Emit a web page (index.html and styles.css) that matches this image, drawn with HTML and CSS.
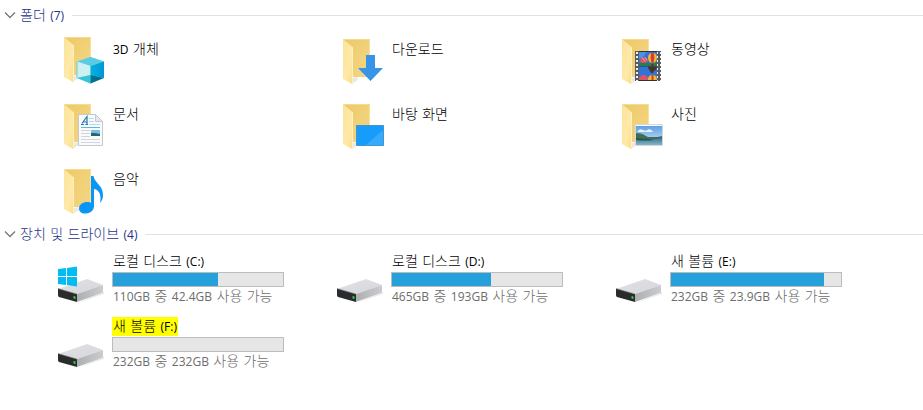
FILE: index.html
```html
<!DOCTYPE html>
<html lang="ko">
<head>
<meta charset="utf-8">
<title>내 PC</title>
<link rel="stylesheet" href="styles.css">
</head>
<body>
<svg class="defs" aria-hidden="true">
  <defs>
    <linearGradient id="back" x1="0" y1="0" x2="1" y2="1">
      <stop offset="0" stop-color="#ecc866"/><stop offset=".5" stop-color="#f1d177"/><stop offset="1" stop-color="#f3d684"/>
    </linearGradient>
    <linearGradient id="flap" x1="0" y1="0" x2="1" y2="1">
      <stop offset="0" stop-color="#fbe39a"/><stop offset=".6" stop-color="#ffe9a9"/><stop offset="1" stop-color="#fbdc86"/>
    </linearGradient>
    <linearGradient id="metal" x1="0" y1="0" x2="1" y2="1">
      <stop offset="0" stop-color="#e0e1e5"/><stop offset="1" stop-color="#d6d7db"/>
    </linearGradient>
    <linearGradient id="side" x1="0" y1="0" x2="1" y2="0">
      <stop offset="0" stop-color="#aeafb3"/><stop offset="1" stop-color="#cbccd0"/>
    </linearGradient>
    <linearGradient id="sky" x1="0" y1="0" x2="0" y2="1">
      <stop offset="0" stop-color="#5f9fe6"/><stop offset="1" stop-color="#d8ecfa"/>
    </linearGradient>
    <linearGradient id="sea" x1="0" y1="0" x2="0" y2="1">
      <stop offset="0" stop-color="#2f6d8c"/><stop offset="1" stop-color="#87b4cc"/>
    </linearGradient>
    <linearGradient id="cube-right" x1="0" y1="0" x2="1" y2="0">
      <stop offset="0" stop-color="#00b4dc"/><stop offset="1" stop-color="#0096d8"/>
    </linearGradient>
    <pattern id="holes" width="4" height="4" patternUnits="userSpaceOnUse" x="21" y="15">
      <rect width="4" height="4" fill="#5a5d60"/><rect x="1" y="0" width="2" height="2" fill="#f0f0f0"/>
    </pattern>
    <symbol id="folder" viewBox="0 0 48 48">
      <path d="M18 41l4-1 1 3-5 3z" fill="#e8e8e8"/>
      <path d="M8 2h27v38H17z" fill="url(#back)"/>
      <path d="M8 2h27v1H9z" fill="#f5dc90"/>
      <path d="M34 3h1v37h-1z" fill="#f9e09a"/>
      <path d="M8 2l10 8.500V46.500L17 47 8 42z" fill="url(#flap)"/>
      <path d="M17.500 10.500V46.500" stroke="#fff0c0" fill="none"/>
    </symbol>
    <symbol id="drive" viewBox="0 0 48 48">
      <path d="M22 47l26-9 1-2-4 0z" fill="#ececec"/>
      <path d="M2 33L31 23l16 6-26 9z" fill="url(#metal)"/>
      <path d="M21 38l26-9v7.500L21 46z" fill="url(#side)"/>
      <path d="M2 32.500l19 5.500v8L3 41q-1-.5-1-2z" fill="#2a2b2c"/>
      <path d="M2 32.500l19 5.500" fill="none" stroke="#8f9093" stroke-width=".6"/>
      <path d="M17.500 40l2 .5v2.500l-2-.5z" fill="#2cdb35"/>
    </symbol>
    <g id="balloon">
      <path d="M34 21q0-5 4.500-5t4.500 5q0 3-3 5h-3q-3-2-3-5z" fill="#f6b62d"/>
      <path d="M37 16.200q1.500-.5 3 0 1 5-.5 9.800h-2q-1.500-5-.5-9.800z" fill="#d93a32"/>
      <path d="M37.500 27h2v2h-2z" fill="#5b3427"/>
    </g>
  </defs>
</svg>

<main>
  <section class="group">
    <h2 class="group-header">
      <button type="button" class="toggle" aria-expanded="true">
        <svg class="chevron" viewBox="0 0 12 8" aria-hidden="true"><path d="M1 1.500l5 5 5-5"/></svg>
        <span>폴더 <span class="latin">(7)</span></span>
      </button>
    </h2>
    <ul class="items folders">
      <li><a class="item" href="#objects">
        <svg class="icon" viewBox="0 0 48 48" aria-hidden="true">
          <use href="#folder" width="48" height="48" y="-2"/>
          <path d="M34.500 20L48 24.500v16L34.500 46.500 21 41V24.500z" fill="#8fdde6"/>
          <path d="M34.500 20L48 24.500 34.500 29 21 24.500z" fill="#5acbe2"/>
          <path d="M21 24.500L34.500 29v9L21 41z" fill="#cdf0f3"/>
          <path d="M34.500 29L48 24.500V41l-13.500-3z" fill="url(#cube-right)"/>
          <path d="M21 41l13.500-3v8.500z" fill="#35c4d8"/>
          <path d="M48 41l-13.500-3v8.500z" fill="#006f91"/>
          <path d="M21 24.500v16" stroke="#62cfdc"/>
        </svg>
        <span class="name"><span class="latin">3D</span> 개체</span></a></li>
      <li><a class="item" href="#downloads">
        <svg class="icon" viewBox="0 0 48 48" aria-hidden="true">
          <use href="#folder" width="48" height="48"/>
          <path d="M31 18h9v13h8L35.500 44 23 31h8z" fill="#3794e6"/>
        </svg>
        <span class="name">다운로드</span></a></li>
      <li><a class="item" href="#videos">
        <svg class="icon" viewBox="0 0 48 48" aria-hidden="true">
          <use href="#folder" width="48" height="48"/>
          <path d="M21 14h26v30H21z" fill="#303336"/>
          <path d="M21 14h4v30h-4zM43 14h4v30h-4z" fill="url(#holes)"/>
          <path d="M25 15h18v13.500H25z" fill="#2f74d8"/>
          <path d="M25 15h7q-1 5-7 7z" fill="#4b93e8"/>
          <path d="M25 26q6-1 9 0t9-1v4H25z" fill="#25804d"/>
          <path d="M26 24q1-4 4-4 3 0 4 4l-3 2h-4z" fill="#dd5560"/>
          <path d="M28 20.500l3 4M31 20.500l2 3" stroke="#f6b0bd" stroke-width=".8"/>
          <use href="#balloon"/>
          <path d="M25 29.500h18V43H25z" fill="#2f74d8"/>
          <path d="M34 29.500h9q0 3-3 4.500l-1 2h-2l-1-2q-2-1.500-2-4.500z" fill="#493428"/>
          <path d="M25 43v-2q3-4 6-3t3 5z" fill="#dd5560"/>
          <path d="M34 43q0-5 4.500-5t4.500 5z" fill="#f6b62d"/>
          <path d="M37.500 38h2v5h-2z" fill="#d93a32"/>
        </svg>
        <span class="name">동영상</span></a></li>
      <li><a class="item" href="#documents">
        <svg class="icon" viewBox="0 0 48 48" aria-hidden="true">
          <use href="#folder" width="48" height="48"/>
          <path d="M22.500 12.500h17l7 7v24h-24z" fill="#f8fafb" stroke="#c3c9cc"/>
          <path d="M39.500 12.500v7h7z" fill="#e4e8ea" stroke="#c3c9cc"/>
          <path d="M25 22.500h3M26 21.500l5-7v8M29.500 22.500H32M27 20h4" fill="none" stroke="#2479ae" stroke-width="1.200"/>
          <path d="M33 16.500h5M33 19.500h5M33 22.500h11" stroke="#b2dcee"/>
          <path d="M25 25.500h19" stroke="#65b5da"/>
          <path d="M25 28.500h9M25 31.500h9M25 34.500h9M25 37.500h19M25 40.500h19" stroke="#d2d6d8"/>
          <path d="M35 28h9v6h-9z" fill="#72c1ec"/><path d="M35 31l4 0 5 1v2h-9z" fill="#315e70"/>
        </svg>
        <span class="name">문서</span></a></li>
      <li><a class="item" href="#desktop">
        <svg class="icon" viewBox="0 0 48 48" aria-hidden="true">
          <use href="#folder" width="48" height="48"/>
          <path d="M21.500 23.500h27v20h-27z" fill="#189cfb" stroke="#3f97cf"/>
          <path d="M48 28v15H31z" fill="#38aafc"/>
        </svg>
        <span class="name">바탕 화면</span></a></li>
      <li><a class="item" href="#pictures">
        <svg class="icon" viewBox="0 0 48 48" aria-hidden="true">
          <use href="#folder" width="48" height="48"/>
          <path d="M21.500 22.500h27v21h-27z" fill="#fff" stroke="#d3d8da"/>
          <path d="M22 24h26v19H22z" fill="url(#sky)"/>
          <path d="M24 29q2-3 5-1t6-1q3 1 4 3H24z" fill="#e7f3fc"/>
          <path d="M22 35h26v8H22z" fill="url(#sea)"/>
          <path d="M22 31q6 0 10 3t16 0v2q-7 2-13 1l-13-1z" fill="#3e6e55"/>
          <path d="M22 36l12 1 6 1q-8 1-18 0z" fill="#285345"/>
        </svg>
        <span class="name">사진</span></a></li>
      <li><a class="item" href="#music">
        <svg class="icon" viewBox="0 0 48 48" aria-hidden="true">
          <use href="#folder" width="48" height="48"/>
          <path d="M35 9h2.500c1 7 9.500 9 9.500 19 0 3-1 6-3 8 1.500-7 0-13-6-14v17c0 4-3 7-8 7.500-4.500.5-7-2-7-5 0-4 4-6.500 8-6.500 1.500 0 3 .2 4 .8z" fill="#0a96f5"/>
        </svg>
        <span class="name">음악</span></a></li>
    </ul>
  </section>

  <section class="group">
    <h2 class="group-header">
      <button type="button" class="toggle" aria-expanded="true">
        <svg class="chevron" viewBox="0 0 12 8" aria-hidden="true"><path d="M1 1.500l5 5 5-5"/></svg>
        <span>장치 및 드라이브 <span class="latin">(4)</span></span>
      </button>
    </h2>
    <ul class="items drives">
      <li><a class="item" href="#c">
        <svg class="icon" viewBox="0 0 48 48" aria-hidden="true">
          <use href="#drive" width="48" height="48"/>
          <path d="M2 13l8-1v8H2zM11 12l10-1.500V20H11zM2 21h8v8l-8-1zM11 21h10v9.500L11 29z" fill="#00bcf2"/>
        </svg>
        <span class="details">
          <span class="name">로컬 디스크 <span class="latin">(C:)</span></span>
          <span class="bar"><span class="used" style="width:62%"></span></span>
          <span class="space"><span class="latin">110GB</span> 중 <span class="latin">42.4GB</span> 사용 가능</span>
        </span></a></li>
      <li><a class="item" href="#d">
        <svg class="icon" viewBox="0 0 48 48" aria-hidden="true"><use href="#drive" width="48" height="48"/></svg>
        <span class="details">
          <span class="name">로컬 디스크 <span class="latin">(D:)</span></span>
          <span class="bar"><span class="used" style="width:58%"></span></span>
          <span class="space"><span class="latin">465GB</span> 중 <span class="latin">193GB</span> 사용 가능</span>
        </span></a></li>
      <li><a class="item" href="#e">
        <svg class="icon" viewBox="0 0 48 48" aria-hidden="true"><use href="#drive" width="48" height="48"/></svg>
        <span class="details">
          <span class="name">새 볼륨 <span class="latin">(E:)</span></span>
          <span class="bar"><span class="used" style="width:90%"></span></span>
          <span class="space"><span class="latin">232GB</span> 중 <span class="latin">23.9GB</span> 사용 가능</span>
        </span></a></li>
      <li><a class="item" href="#f">
        <svg class="icon" viewBox="0 0 48 48" aria-hidden="true"><use href="#drive" width="48" height="48"/></svg>
        <span class="details">
          <mark class="name">새 볼륨 <span class="latin">(F:)</span></mark>
          <span class="bar"><span class="used" style="width:0%"></span></span>
          <span class="space"><span class="latin">232GB</span> 중 <span class="latin">232GB</span> 사용 가능</span>
        </span></a></li>
    </ul>
  </section>
</main>
</body>
</html>
```
FILE: styles.css
```css
* { box-sizing: border-box; }

body {
  margin: 0;
  background: #fff;
  color: #000;
  font-family: "DejaVu Sans", "Noto Sans CJK KR", sans-serif;
  font-size: 14px;
  font-weight: 300;
  line-height: 18px;
}

.defs { position: absolute; width: 0; height: 0; }

.latin {
  font-family: "Open Sans", sans-serif;
  font-size: 12px;
  font-weight: 400;
}

.group + .group { margin-top: 3px; }

.group-header {
  display: flex;
  align-items: center;
  gap: 8px;
  height: 30px;
  margin: 0;
  font-size: 14px;
  font-weight: 300;
}

.group-header::after {
  content: "";
  flex: 1;
  height: 1px;
  background: #e2e2e2;
}

.toggle {
  display: flex;
  align-items: center;
  gap: 4px;
  padding: 0 0 0 4px;
  border: 0;
  background: none;
  color: #1e3287;
  font: inherit;
  line-height: 18px;
}

.chevron {
  width: 12px;
  height: 8px;
  fill: none;
  stroke: #777;
  stroke-width: 1.3;
}

.items {
  display: grid;
  grid-template-columns: repeat(auto-fill, 279px);
  margin: 0;
  padding: 0 0 0 56px;
  list-style: none;
}

.folders {
  grid-auto-rows: 49px;
  row-gap: 16px;
  padding-top: 7px;
}

.drives {
  grid-auto-rows: 53px;
  row-gap: 12px;
  padding-top: 3px;
}

.item {
  display: flex;
  gap: 8px;
  color: inherit;
  text-decoration: none;
}

.icon {
  flex: none;
  width: 48px;
  height: 48px;
  overflow: visible;
}

.name { padding: 0 1px; white-space: nowrap; }
.folders .name { padding-top: 3px; }
.drives .icon { margin-top: 4px; }

.details {
  display: flex;
  flex-direction: column;
  align-items: flex-start;
}

mark {
  background: #ff0;
  color: #000;
}

.bar {
  width: 172px;
  height: 15px;
  margin-top: 1px;
  border: 1px solid #bcbcbc;
  background: #e6e6e6;
}

.used {
  display: block;
  height: 100%;
  background: #26a0da;
}

.space {
  padding-left: 1px;
  color: #6d6d6d;
  white-space: nowrap;
}
```
